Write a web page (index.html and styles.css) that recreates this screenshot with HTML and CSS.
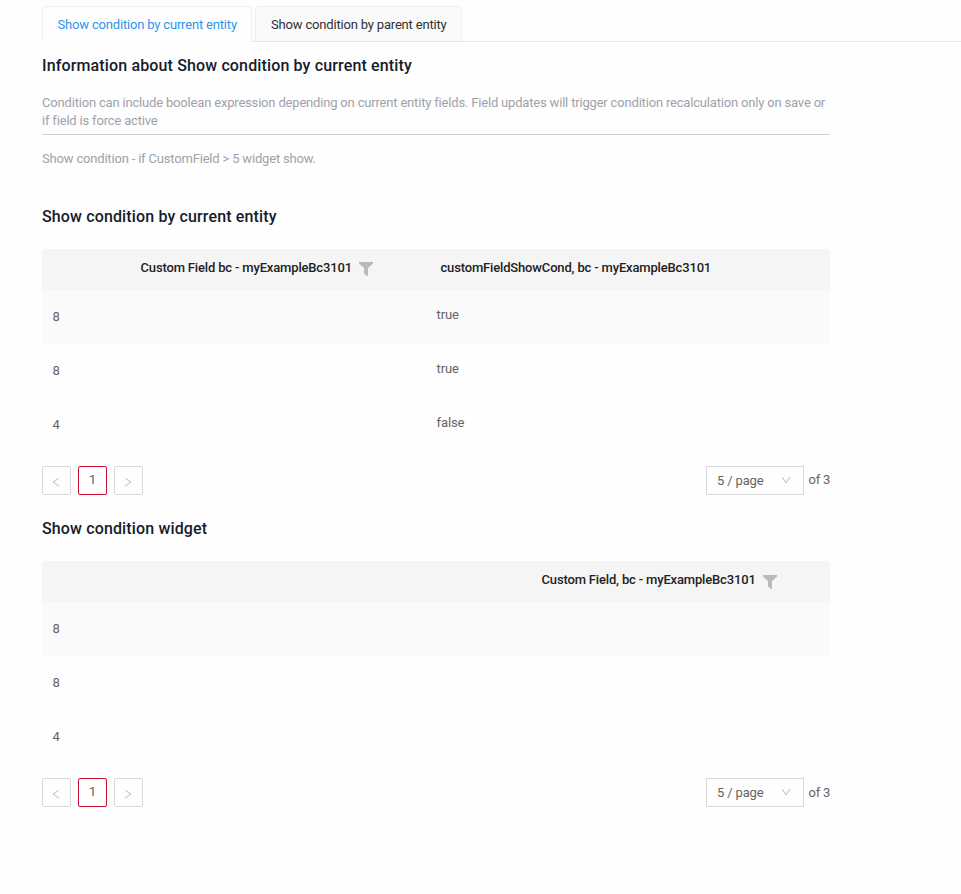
FILE: index.html
```
<!DOCTYPE html>
<html lang="en">
<head>
<meta charset="utf-8">
<title>Show condition</title>
<link rel="stylesheet" href="styles.css">
</head>
<body>
<nav class="tabs">
  <div class="tab active">Show condition by current entity</div>
  <div class="tab">Show condition by parent entity</div>
</nav>
<main class="content">
  <section class="info">
    <h2>Information about Show condition by current entity</h2>
    <p class="lead">Condition can include boolean expression depending on current entity fields. Field updates will trigger condition recalculation only on save or<br>if field is force active</p>
    <p class="note">Show condition - if CustomField &gt; 5 widget show.</p>
  </section>

  <section class="widget">
    <h2>Show condition by current entity</h2>
    <div class="table">
      <div class="row head">
        <div class="cell centered">Custom Field bc - myExampleBc3101
          <svg class="filter" viewBox="0 0 14 14"><path d="M0 0h14v1.500L9 6v8H8L5 11.500V6L0 1.500z"/></svg>
        </div>
        <div class="cell second">customFieldShowCond, bc - myExampleBc3101</div>
      </div>
      <div class="row shaded"><div class="cell num">8</div><div class="cell bool">true</div></div>
      <div class="row"><div class="cell num">8</div><div class="cell bool">true</div></div>
      <div class="row"><div class="cell num">4</div><div class="cell bool">false</div></div>
    </div>
    <div class="pager">
      <div class="btn"><svg class="arrow" viewBox="0 0 8 10"><path d="M7 1L1.200 5L7 9"/></svg></div>
      <div class="btn current">1</div>
      <div class="btn"><svg class="arrow" viewBox="0 0 8 10"><path d="M1 1L6.800 5L1 9"/></svg></div>
      <div class="select"><span>5 / page</span><svg class="chevron" viewBox="0 0 10 8"><path d="M1 1L5 6.800L9 1"/></svg></div>
      <span class="total">of 3</span>
    </div>
  </section>

  <section class="widget">
    <h2>Show condition widget</h2>
    <div class="table">
      <div class="row head">
        <div class="cell wide">Custom Field, bc - myExampleBc3101
          <svg class="filter" viewBox="0 0 14 14"><path d="M0 0h14v1.500L9 6v8H8L5 11.500V6L0 1.500z"/></svg>
        </div>
      </div>
      <div class="row shaded"><div class="cell num">8</div></div>
      <div class="row"><div class="cell num">8</div></div>
      <div class="row"><div class="cell num">4</div></div>
    </div>
    <div class="pager">
      <div class="btn"><svg class="arrow" viewBox="0 0 8 10"><path d="M7 1L1.200 5L7 9"/></svg></div>
      <div class="btn current">1</div>
      <div class="btn"><svg class="arrow" viewBox="0 0 8 10"><path d="M1 1L6.800 5L1 9"/></svg></div>
      <div class="select"><span>5 / page</span><svg class="chevron" viewBox="0 0 10 8"><path d="M1 1L5 6.800L9 1"/></svg></div>
      <span class="total low">of 3</span>
    </div>
  </section>
</main>
</body>
</html>
```
FILE: styles.css
```
* { box-sizing: border-box; }
body {
  margin: 0;
  background: #fefefe;
  color: #646464;
  font: 13px/18px Roboto, sans-serif;
}
h2, p { margin: 0; }
.tabs {
  display: flex;
  gap: 3px;
  height: 42px;
  margin-left: 42px;
  padding-top: 6px;
  box-shadow: inset 0 -1px #e8e8e8;
}
.tab {
  width: 207px;
  height: 36px;
  padding-left: 15px;
  border: 1px solid #efefef;
  border-bottom-color: #e8e8e8;
  border-radius: 4px 4px 0 0;
  background: #fafafa;
  color: #303030;
  line-height: 35px;
  letter-spacing: -0.18px;
  white-space: nowrap;
}
.tab.active {
  width: 210px;
  padding-left: 14.5px;
  background: #fefefe;
  border-bottom-color: #fefefe;
  color: #2c95ee;
}
.content { width: 788px; margin-left: 42px; }
h2 {
  padding-top: 1px;
  color: #141c2c;
  font-size: 16px;
  line-height: 24px;
  font-weight: 500;
  letter-spacing: 0.14px;
  white-space: nowrap;
}
.info { padding-top: 11px; height: 162px; }
.lead {
  margin-top: 16px;
  height: 41px;
  border-bottom: 1px solid #cfcfd2;
  color: #a0a2aa;
  letter-spacing: -0.182px;
  white-space: nowrap;
}
.note { margin-top: 15px; color: #a0a2aa; letter-spacing: -0.182px; }
.widget { height: 312px; }
.table { margin-top: 20px; }
.row { display: flex; height: 54px; }
.row.shaded { background: #fafafa; }
.row.head {
  height: 41px;
  background: #f5f5f5;
  border-radius: 4px 4px 0 0;
  color: #222;
  font-weight: 500;
  letter-spacing: -0.165px;
}
.cell { display: flex; width: 394px; white-space: nowrap; }
.head .cell { padding-top: 10px; }
.head .centered { padding-left: 98.5px; }
.head .second { padding-left: 4.5px; }
.head .wide { padding-left: 499.5px; }
.num { padding: 18px 0 0 10.5px; }
.bool { padding-top: 16px; padding-left: 0.5px; letter-spacing: -0.1px; }
.filter { width: 14px; height: 14px; margin: 3px 0 0 7px; fill: #b9bac0; flex: none; }
.wide .filter { margin-top: 4px; }
.pager { display: flex; align-items: flex-start; margin-top: 14px; }
.btn {
  display: flex;
  justify-content: center;
  width: 29px;
  height: 29px;
  margin-right: 7px;
  border: 1px solid #d9d9d9;
  border-radius: 2px;
}
.btn.current { border-color: #c8102e; font-size: 13.5px; line-height: 25px; }
.arrow { width: 8px; height: 10px; margin: 10px 1px 0 0; }
.arrow path, .chevron path { fill: none; stroke: #bcbcbc; stroke-width: 1; }
.select {
  display: flex;
  justify-content: space-between;
  width: 98px;
  height: 29px;
  margin-left: auto;
  padding: 0 12px 0 10px;
  border: 1px solid #d9d9d9;
  line-height: 28px;
  letter-spacing: -0.15px;
}
.chevron { width: 10px; height: 8px; margin-top: 9px; }
.total { width: 21px; margin-left: 5px; line-height: 27px; letter-spacing: -0.18px; text-indent: -0.5px; white-space: nowrap; }
.total.low { line-height: 29px; }
```
